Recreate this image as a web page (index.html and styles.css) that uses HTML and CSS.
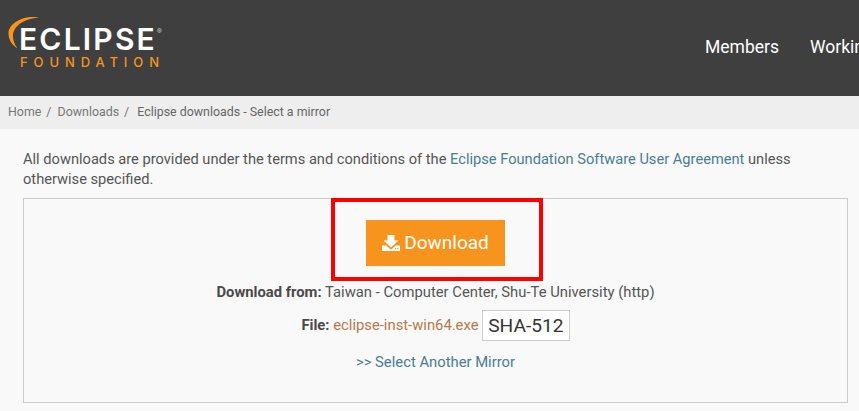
FILE: index.html
```html
<!DOCTYPE html>
<html lang="en">
<head>
  <meta charset="UTF-8">
  <meta name="viewport" content="width=device-width, initial-scale=1.0">
  <title>Eclipse downloads - Select a mirror</title>
  <link rel="stylesheet" href="styles.css">
</head>
<body>

  <!-- Header -->
  <header class="header">
    <a class="logo" href="#">
      <svg class="logo-arc" width="32" height="34" viewBox="0 0 32 34">
        <path d="M31 1.500C14 -1 0 8 0.500 18C0.800 24 4 29 9.500 32.500C6.500 28 4.800 24 5 19.500C5.500 10 16 2.500 31 1.500Z" fill="#f7941e"/>
      </svg>
      <span class="logo-name">ECLIPSE<sup class="logo-reg">®</sup></span>
      <span class="logo-sub">FOUNDATION</span>
    </a>
    <nav class="nav">
      <a href="#">Members</a>
      <a href="#">Working Groups</a>
    </nav>
  </header>

  <!-- Breadcrumb -->
  <div class="breadcrumb">
    <a href="#">Home</a><span class="sep">/</span>
    <a href="#">Downloads</a><span class="sep">/</span>
    <span class="current">Eclipse downloads - Select a mirror</span>
  </div>

  <main class="main">
    <p class="terms">All downloads are provided under the terms and conditions of the <a href="#">Eclipse Foundation Software User Agreement</a> unless otherwise specified.</p>

    <div class="download-box">
      <a class="btn-download" href="#">
        <svg class="btn-icon" width="18" height="16" viewBox="0 0 18 16">
          <path d="M5.500 0h7v5.500h4L9 12.500 1.500 5.500h4z" fill="#fff"/>
          <path d="M0 10.500h4.500L7.500 13.500a2 2 0 0 0 3 0L13.500 10.500H18V16H0z" fill="#fff"/>
          <rect x="13" y="13" width="1.200" height="1.200" fill="#f7941e"/>
          <rect x="15.200" y="13" width="1.200" height="1.200" fill="#f7941e"/>
        </svg>
        Download
      </a>
      <p class="line"><b>Download from:</b> Taiwan - Computer Center, Shu-Te University (http)</p>
      <p class="line line-file"><b>File:</b> <a class="file-link" href="#">eclipse-inst-win64.exe</a> <span class="sha">SHA-512</span></p>
      <p class="line"><a class="mirror-link" href="#">&gt;&gt; Select Another Mirror</a></p>

      <!-- Red marker drawn over the button -->
      <div class="marker"></div>
    </div>
  </main>

</body>
</html>
```

FILE: styles.css
```css
/* Reset margin and padding */
body, html {
  margin: 0;
  padding: 0;
  height: 100%;
  overflow: hidden;
  font-family: Roboto, "Liberation Sans", sans-serif;
  background: #f9f9f9;
  color: #4a4a4a;
}

a {
  text-decoration: none;
}

/* Header */
.header {
  display: flex;
  justify-content: space-between;
  height: 96px;
  padding-left: 8px;
  background: #3f3f3f;
  overflow: hidden;
}

.logo {
  position: relative;
  display: flex;
  flex-direction: column;
  width: 170px;
  padding-top: 23px;
}

.logo-arc {
  position: absolute;
  top: 16px;
  left: 0;
}

.logo-name {
  padding-left: 11px;
  font-family: Inter, sans-serif;
  font-size: 30px;
  font-weight: 600;
  line-height: 32px;
  letter-spacing: 2.2px;
  white-space: nowrap;
  color: #fff;
}

.logo-reg {
  font-size: 7px;
  line-height: 0;
  letter-spacing: 0;
  vertical-align: 16px;
  color: #ccc;
}

.logo-sub {
  padding-left: 12px;
  font-family: Inter, sans-serif;
  font-size: 13px;
  font-weight: 500;
  line-height: 14px;
  letter-spacing: 5.9px;
  white-space: nowrap;
  color: #f7941e;
}

.nav {
  display: flex;
  flex-shrink: 0;
  gap: 31px;
  width: 154px;
  padding-top: 37px;
  font-size: 17.5px;
  line-height: 20px;
  white-space: nowrap;
}

.nav a {
  color: #fff;
}

/* Breadcrumb */
.breadcrumb {
  height: 33px;
  padding-left: 8px;
  font-size: 12.4px;
  line-height: 32px;
  background: #eeeeee;
  color: #777;
}

.breadcrumb a {
  color: #777;
}

.breadcrumb .sep {
  margin: 0 3px 0 5px;
}

.breadcrumb .current {
  margin-left: 2px;
  color: #666;
}

/* Main content */
.main {
  padding: 20px 11px 0 23px;
}

.terms {
  margin: 0 0 9px;
  font-size: 14.65px;
  line-height: 20px;
  color: #555;
}

.terms a {
  color: #4a7d93;
}

.download-box {
  position: relative;
  height: 203px;
  border: 1px solid #ccc;
  text-align: center;
}

.btn-download {
  display: flex;
  align-items: center;
  justify-content: center;
  gap: 4px;
  box-sizing: border-box;
  width: 139px;
  height: 46px;
  padding-bottom: 1px;
  margin: 21px auto 16px;
  font-size: 19px;
  background: #f7941e;
  color: #fff;
}

.line {
  margin: 0 0 8px;
  font-size: 14.8px;
  line-height: 20px;
  color: #555;
}

.line b {
  color: #4a4a4a;
}

.line-file {
  margin-bottom: 11px;
}

.file-link {
  color: #b5794a;
}

.sha {
  display: inline-block;
  padding: 3px 5px;
  border: 1px solid #ccc;
  font-size: 19.2px;
  line-height: 23px;
  vertical-align: -2px;
  background: #fff;
  color: #333;
}

.mirror-link {
  color: #4a7d93;
}

.marker {
  position: absolute;
  top: -1px;
  left: 307px;
  width: 204px;
  height: 75px;
  border: 4px solid #ff0000;
}
```
